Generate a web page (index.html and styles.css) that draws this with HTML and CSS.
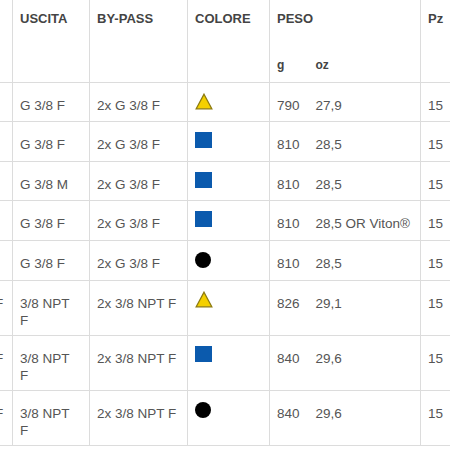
FILE: index.html
```html
<!DOCTYPE html>
<html lang="it">
<head>
<meta charset="utf-8">
<title>Specifiche</title>
<link rel="stylesheet" href="styles.css">
</head>
<body>
<table class="spec">
  <colgroup>
    <col class="w-in">
    <col class="w-out">
    <col class="w-bypass">
    <col class="w-color">
    <col class="w-g">
    <col class="w-oz">
    <col class="w-pz">
  </colgroup>
  <thead>
    <tr>
      <th rowspan="2">IN</th>
      <th rowspan="2">USCITA</th>
      <th rowspan="2">BY-PASS</th>
      <th rowspan="2">COLORE</th>
      <th colspan="2" class="peso">PESO</th>
      <th rowspan="2">Pz</th>
    </tr>
    <tr>
      <th class="unit g">g</th>
      <th class="unit oz">oz</th>
    </tr>
  </thead>
  <tbody>
    <tr>
      <td>G 3/8 F</td><td class="out">G 3/8 F</td><td>2x G 3/8 F</td>
      <td class="color"><div class="swatch"><svg class="tri" width="18" height="17" viewBox="0 0 18 17"><polygon points="9,1.2 16.8,15.8 1.2,15.8" /></svg></div></td>
      <td class="g">790</td><td class="oz">27,9</td><td>15</td>
    </tr>
    <tr>
      <td>G 3/8 F</td><td class="out">G 3/8 F</td><td>2x G 3/8 F</td>
      <td class="color"><div class="swatch"><span class="sq"></span></div></td>
      <td class="g">810</td><td class="oz">28,5</td><td>15</td>
    </tr>
    <tr>
      <td>G 3/8 M</td><td class="out">G 3/8 M</td><td>2x G 3/8 F</td>
      <td class="color"><div class="swatch"><span class="sq"></span></div></td>
      <td class="g">810</td><td class="oz">28,5</td><td>15</td>
    </tr>
    <tr>
      <td>G 3/8 F</td><td class="out">G 3/8 F</td><td>2x G 3/8 F</td>
      <td class="color"><div class="swatch"><span class="sq"></span></div></td>
      <td class="g">810</td><td class="oz">28,5 OR Viton®</td><td>15</td>
    </tr>
    <tr>
      <td>G 3/8 F</td><td class="out">G 3/8 F</td><td>2x G 3/8 F</td>
      <td class="color"><div class="swatch"><span class="dot"></span></div></td>
      <td class="g">810</td><td class="oz">28,5</td><td>15</td>
    </tr>
    <tr>
      <td>3/8 NPT F</td><td class="out">3/8 NPT F</td><td>2x 3/8 NPT F</td>
      <td class="color"><div class="swatch"><svg class="tri" width="18" height="17" viewBox="0 0 18 17"><polygon points="9,1.2 16.8,15.8 1.2,15.8" /></svg></div></td>
      <td class="g">826</td><td class="oz">29,1</td><td>15</td>
    </tr>
    <tr>
      <td>3/8 NPT F</td><td class="out">3/8 NPT F</td><td>2x 3/8 NPT F</td>
      <td class="color"><div class="swatch"><span class="sq"></span></div></td>
      <td class="g">840</td><td class="oz">29,6</td><td>15</td>
    </tr>
    <tr>
      <td>3/8 NPT F</td><td class="out">3/8 NPT F</td><td>2x 3/8 NPT F</td>
      <td class="color"><div class="swatch"><span class="dot"></span></div></td>
      <td class="g">840</td><td class="oz">29,6</td><td>15</td>
    </tr>
  </tbody>
</table>
</body>
</html>
```
FILE: styles.css
```css
html, body {
  margin: 0;
  padding: 0;
  background: #fff;
  overflow: hidden;
}

.spec {
  border-collapse: collapse;
  table-layout: fixed;
  width: 546px;
  margin-left: -66px;
  font-family: "Liberation Sans", Arial, sans-serif;
  color: #555;
}

.w-in { width: 78px; }
.w-out { width: 77px; }
.w-bypass { width: 98px; }
.w-color { width: 82px; }
.w-g { width: 39px; }
.w-oz { width: 112px; }
.w-pz { width: 60px; }

.spec th,
.spec td {
  border: 1px solid #dcdcdc;
  text-align: left;
  vertical-align: top;
  white-space: nowrap;
}

.spec th {
  border-top: none;
  font-size: 13px;
  font-weight: bold;
  line-height: 17px;
  color: #444;
  padding: 10px 8px 0 7px;
}

.spec th.peso {
  border-bottom: none;
  padding-bottom: 15px;
}

.spec th.unit {
  border-top: none;
  font-size: 12px;
  padding-top: 15px;
  padding-bottom: 8px;
}

.spec td {
  font-size: 13.5px;
  line-height: 17px;
  padding: 14px 8px 6px 7px;
}

.spec .g { border-right: none; }
.spec .oz { border-left: none; }

.spec td.out {
  white-space: normal;
  padding-right: 13px;
}

.spec td.color {
  padding-top: 10px;
}

.swatch {
  height: 22.4px;
}

.tri {
  display: block;
  margin-left: -0.5px;
}

.tri polygon {
  fill: #f4d000;
  stroke: #8c7a10;
  stroke-width: 1.3;
  stroke-linejoin: miter;
}

.sq {
  display: block;
  width: 17px;
  height: 16px;
  background: #0b5aad;
}

.dot {
  display: block;
  width: 16px;
  height: 16px;
  margin-top: 1px;
  border-radius: 50%;
  background: #000;
}
```
